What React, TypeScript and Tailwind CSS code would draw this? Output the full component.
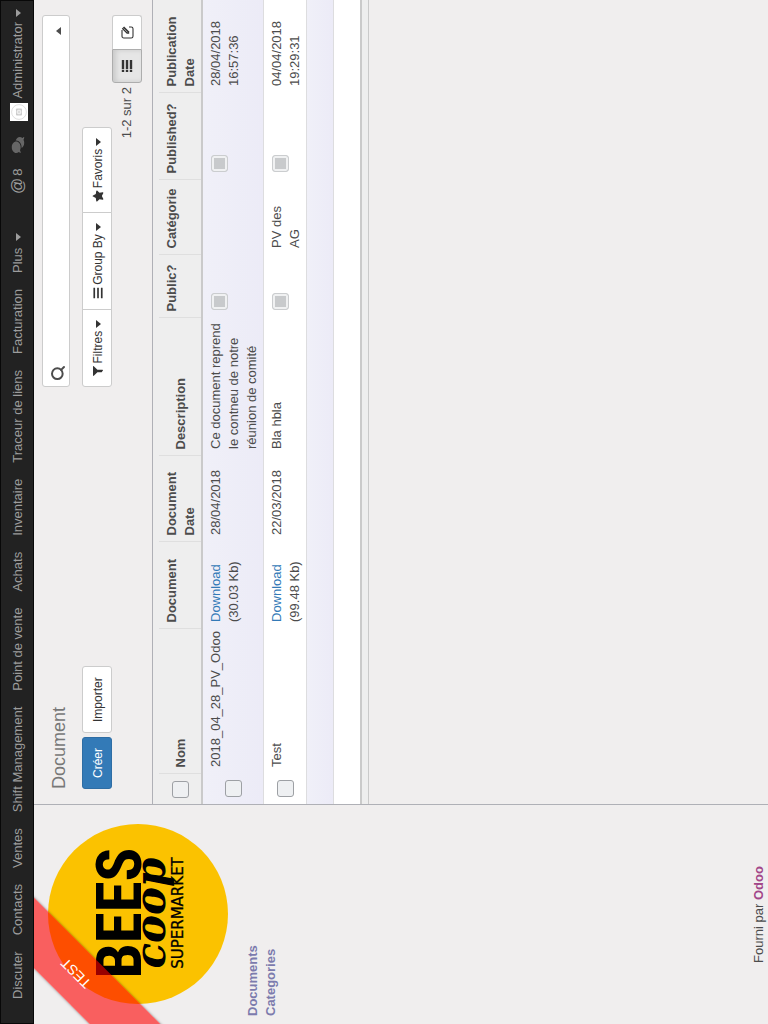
import React from "react";
import { FaBars, FaComments, FaFilter, FaStar } from "react-icons/fa";
import { Search } from "lucide-react";

const menus = [
  "Discuter",
  "Contacts",
  "Ventes",
  "Shift Management",
  "Point de vente",
  "Achats",
  "Inventaire",
  "Traceur de liens",
  "Facturation",
];

type Row = {
  name: string;
  size: string;
  date: string;
  description: string;
  category: string;
  published: string;
};

const rows: Row[] = [
  {
    name: "2018_04_28_PV_Odoo",
    size: "(30.03 Kb)",
    date: "28/04/2018",
    description: "Ce document reprend le contneu de notre réunion de comité",
    category: "",
    published: "28/04/2018 16:57:36",
  },
  {
    name: "Test",
    size: "(99.48 Kb)",
    date: "22/03/2018",
    description: "Bla hbla",
    category: "PV des AG",
    published: "04/04/2018 19:29:31",
  },
];

function Caret({ up = false }: { up?: boolean }) {
  return (
    <svg viewBox="0 0 8 5" className="ml-px h-[5px] w-2 shrink-0 fill-current" aria-hidden="true">
      <path d={up ? "M0 5h8L4 0z" : "M0 0h8L4 5z"} />
    </svg>
  );
}

function ListIcon() {
  return (
    <svg viewBox="0 0 14 12" className="h-3 w-3.5 fill-current" aria-hidden="true">
      <path d="M1 .8h2.2v2.4H1zM1 4.8h2.2v2.4H1zM1 8.8h2.2v2.4H1zM4 .8h9v2.4H4zM4 4.8h9v2.4H4zM4 8.8h9v2.4H4z" />
    </svg>
  );
}

function EditIcon() {
  return (
    <svg viewBox="0 0 14 14" className="h-3.5 w-3.5" fill="none" aria-hidden="true">
      <path
        d="M9 2H2.8A1.8 1.8 0 0 0 1 3.8v7.4A1.8 1.8 0 0 0 2.8 13h7.4a1.8 1.8 0 0 0 1.8-1.8V9"
        stroke="currentColor"
        strokeWidth="1.1"
      />
      <path d="M5.2 9.2V6.8l5-5 2.3 2.3-5 5z" fill="currentColor" />
      <path d="M6.6 7.6l4-4" stroke="#fff" strokeWidth=".6" />
    </svg>
  );
}

function Avatar() {
  return (
    <svg viewBox="0 0 18 18" className="mt-0.5 h-[18px] w-[18px] shrink-0" aria-hidden="true">
      <rect width="18" height="18" fill="#fff" />
      <circle cx="9" cy="9" r="7.4" fill="none" stroke="#d5d5d5" strokeWidth=".8" />
      <rect x="5.5" y="6" width="7" height="6" rx=".8" fill="#ccc" />
      <circle cx="9" cy="9" r="1.9" fill="#ddd" stroke="#fff" strokeWidth=".7" />
    </svg>
  );
}

function Logo() {
  return (
    <svg viewBox="0 0 180 180" className="h-[180px] w-[180px]" role="img" aria-label="Bees coop supermarket">
      <circle cx="90" cy="90" r="90" fill="#fbc200" />
      <text
        x="91"
        y="93"
        textAnchor="middle"
        fontFamily="'Roboto Condensed','Liberation Sans Narrow','Liberation Sans',sans-serif"
        fontWeight="700"
        fontSize="63"
      >
        BEES
      </text>
      <text
        x="91"
        y="117"
        textAnchor="middle"
        fontFamily="'DejaVu Serif',serif"
        fontStyle="italic"
        fontWeight="700"
        fontSize="42"
      >
        coop
      </text>
      <text x="91" y="135" textAnchor="middle" fontFamily="'DejaVu Sans',sans-serif" fontSize="15" stroke="#000" strokeWidth=".3">
        SUPERMARKET
      </text>
    </svg>
  );
}

const box = "block h-[17px] w-[17px] appearance-none rounded-[3px] border";
const btn = "flex h-[30px] items-center border border-[#ccc] bg-white text-[12px] text-[#333]";
const th = "border-l border-[#dfdfdf] pt-1 pb-0.5 pl-1.5 pr-1 text-left font-bold";
const td = "pt-1 pb-0.5 pl-[7px] pr-1";

function Tick({ label }: { label: string }) {
  return <input type="checkbox" aria-label={label} className={box + " mx-auto border-[#9da0a4] bg-[#eef0f2]"} />;
}

function Flag({ label }: { label: string }) {
  return (
    <input
      type="checkbox"
      disabled
      aria-label={label}
      className={box + " mt-2 ml-0.5 border-[#cbcdcf] bg-[#c8cacc] shadow-[inset_0_0_0_2px_#f0f1f2]"}
    />
  );
}

function Navbar() {
  return (
    <nav className="relative z-10 flex h-[34px] shrink-0 items-center border border-[#080808] bg-[#222] pt-0.5 pr-2 pl-4 text-[#9d9d9d]">
      {menus.map((m) => (
        <a key={m} href="#" className="px-2 whitespace-nowrap">
          {m}
        </a>
      ))}
      <a href="#" className="flex items-center gap-1.5 px-2">
        Plus <Caret />
      </a>
      <div className="ml-auto flex items-center">
        <a href="#" className="flex items-center gap-0.5 px-2">
          <span className="text-[16px]">@</span> 8
        </a>
        <a href="#" aria-label="Conversations" className="px-2 text-[#666]">
          <FaComments className="h-4 w-4" />
        </a>
        <a href="#" className="flex items-center gap-1 pl-2">
          <Avatar /> Administrator <Caret />
        </a>
      </div>
    </nav>
  );
}

function Sidebar() {
  return (
    <aside className="flex w-[220px] shrink-0 flex-col border-r border-[#afb0b6]">
      <div className="relative px-5 pt-3.5">
        <Logo />
        <div className="absolute top-4 -left-[50px] flex h-[50px] w-[200px] -rotate-45 items-center justify-center bg-[rgba(255,0,0,0.6)] pt-0.5 text-[14px] text-white shadow-[0_0_3px_rgba(0,0,0,0.4)]">
          TEST
        </div>
      </div>
      <div className="mt-4 flex flex-col px-2 font-bold text-[#7c7bad]">
        <a href="#">Documents</a>
        <a href="#">Categories</a>
      </div>
      <p className="mt-auto text-center">
        Fourni par{" "}
        <a href="#" className="font-bold text-[#a24689]">
          Odoo
        </a>
      </p>
    </aside>
  );
}

function ControlPanel() {
  return (
    <header className="flex h-[119px] items-start border-b border-[#afb0b6] px-[15px] pt-2">
      <div className="flex flex-1 flex-col">
        <h1 className="flex h-10 items-start pt-1 text-[18px] leading-[26px] text-[#777]">Document</h1>
        <div className="flex gap-1">
          <button className="h-[30px] rounded-[3px] border border-[#2e6da4] bg-[#337ab7] px-2.5 pt-0.5 text-[12px] text-white">
            Créer
          </button>
          <button className={btn + " rounded-[3px] px-2.5 pt-0.5"}>Importer</button>
        </div>
      </div>
      <div className="flex w-[48%] flex-col">
        <label className="mb-3 flex h-7 items-center rounded-[3px] border border-[#ccc] bg-white px-[5px] pt-1 text-[#4c4c4c]">
          <Search className="h-4 w-4" strokeWidth={3} aria-hidden="true" />
          <input type="text" aria-label="Rechercher" className="min-w-0 flex-1 px-1 outline-none" />
          <span className="flex items-center pr-1.5">
            <Caret up />
          </span>
        </label>
        <div className="flex">
          <button className={btn + " gap-0.5 rounded-l-[3px] px-2.5 pt-0.5"}>
            <FaFilter className="h-2.5 w-2.5" /> Filtres <Caret />
          </button>
          <button className={btn + " -ml-px gap-0.5 px-2.5 pt-0.5"}>
            <FaBars className="h-3 w-3" /> Group By <Caret />
          </button>
          <button className={btn + " -ml-px gap-0.5 rounded-r-[3px] px-2.5 pt-0.5"}>
            <FaStar className="h-3 w-3" /> Favoris <Caret />
          </button>
        </div>
        <div className="flex items-center justify-end">
          <span className="mr-1">1-2 sur 2</span>
          <button
            aria-label="Liste"
            className="flex h-[30px] w-[34px] items-center justify-center rounded-l-[3px] border border-[#adadad] bg-[#e6e6e6] text-[#333] shadow-[inset_0_3px_5px_rgba(0,0,0,0.125)]"
          >
            <ListIcon />
          </button>
          <button aria-label="Formulaire" className={btn + " w-[34px] justify-center rounded-r-[3px] border-l-0"}>
            <EditIcon />
          </button>
        </div>
      </div>
    </header>
  );
}

function DocumentTable() {
  return (
    <div className="border-b border-[#cacaca] bg-[#eee] pt-1.5 pb-1.5">
      <table className="w-full table-fixed border-collapse">
        <colgroup>
          <col className="w-[30px]" />
          <col className="w-[145px]" />
          <col className="w-[87px]" />
          <col className="w-[86px]" />
          <col className="w-[138px]" />
          <col className="w-[63px]" />
          <col className="w-[75px]" />
          <col className="w-[87px]" />
          <col />
        </colgroup>
        <thead className="border-b-2 border-[#cacaca]">
          <tr className="h-[43px] align-top">
            <th className="align-middle">
              <Tick label="Tout sélectionner" />
            </th>
            <th className={th + " align-middle"}>Nom</th>
            <th className={th}>Document</th>
            <th className={th}>Document Date</th>
            <th className={th + " align-middle"}>Description</th>
            <th className={th}>Public?</th>
            <th className={th}>Catégorie</th>
            <th className={th}>Published?</th>
            <th className={th}>Publication Date</th>
          </tr>
        </thead>
        <tbody className="border-b-2 border-[#cacaca]">
          {rows.map((r) => (
            <tr
              key={r.name}
              className="border-b border-[#dddddf] bg-white align-top odd:bg-linear-to-b odd:from-[#f0f0f8] odd:to-[#ecebf7]"
            >
              <td className="align-middle">
                <Tick label={"Sélectionner " + r.name} />
              </td>
              <td className={td}>{r.name}</td>
              <td className={td}>
                <a href="#" className="text-[#337ab7]">
                  Download
                </a>{" "}
                <span className="whitespace-nowrap">{r.size}</span>
              </td>
              <td className={td}>{r.date}</td>
              <td className={td}>{r.description}</td>
              <td className="pl-1.5">
                <Flag label="Public?" />
              </td>
              <td className="pt-1 pr-2 pb-0.5 pl-[7px]">{r.category}</td>
              <td className="pl-1.5">
                <Flag label="Published?" />
              </td>
              <td className={td}>{r.published}</td>
            </tr>
          ))}
          <tr className="h-[27px] border-b border-[#dddddf] bg-linear-to-b from-[#f0f0f8] to-[#ecebf7]">
            <td colSpan={9} />
          </tr>
          <tr className="h-[27px] bg-white">
            <td colSpan={9} />
          </tr>
        </tbody>
      </table>
    </div>
  );
}

export default function App() {
  return (
    <div className="h-screen w-screen overflow-hidden">
      <div className="flex h-[100vw] w-[100vh] origin-top-left translate-y-[100vh] -rotate-90 flex-col overflow-hidden bg-[#f0eeee] font-['Liberation_Sans',Arial,sans-serif] text-[13px] leading-[18px] text-[#4c4c4c]">
        <Navbar />
        <div className="flex min-h-0 flex-1">
          <Sidebar />
          <main className="min-w-0 flex-1">
            <ControlPanel />
            <DocumentTable />
          </main>
        </div>
      </div>
    </div>
  );
}
